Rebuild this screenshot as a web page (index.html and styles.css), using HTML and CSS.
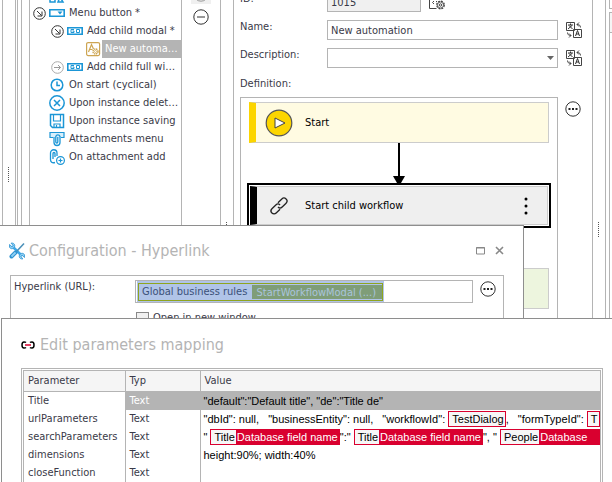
FILE: index.html
```html
<!DOCTYPE html>
<html lang="en">
<head>
<meta charset="utf-8">
<title>Automation editor</title>
<link rel="stylesheet" href="styles.css">
</head>
<body>
<svg class="defs" width="0" height="0" aria-hidden="true">
  <symbol id="translate" viewBox="0 0 16 16"><path d="M.5.5h8v8h-8zM7.500 7.500h8v8h-8z" fill="#fff" stroke="#444"/><path d="M2 3h5M4.500 1.500V3M3 3.500l3.500 3.500M6 3.500L2 7M9.500 14l2-5.500 2 5.500M10 12h3" fill="none" stroke="#333"/><path d="M11 2.500c2.500 0 3.500 1 3.500 3M13 .5l-2 2 2 2M1.500 10.500c0 2 1 3 3.500 3M3 11.500l2 2-2 2" fill="none" stroke="#444"/></symbol>
  <symbol id="more" viewBox="0 0 16 16"><circle cx="8" cy="8" r="7.200" fill="#fff" stroke="#333"/><path d="M3.500 7h2v2h-2zM7 7h2v2H7zM10.500 7h2v2h-2z" fill="#222"/></symbol>
  <symbol id="go" viewBox="0 0 16 16"><path d="M.8 4.800h14.400v6.400H.8z" fill="#fff" stroke="#1b96d6" stroke-width="1.600"/><path d="M7 6.500H4v3h3V8H5.500M9.500 6.500h3v3h-3z" fill="none" stroke="#1b96d6"/></symbol>
</svg>
<div class="app">
  <div class="edge"></div>
  <div class="splitter"><span class="grip grip-left"></span></div>
  <aside class="frame">
    <div class="inner">
      <ul class="tree">
        <li class="lv1"><svg class="ico" viewBox="0 0 16 16"><path d="M1 12h5v3H1zM9 15l2-5 3 5z" fill="none" stroke="#1b96d6" stroke-width="1.500"/></svg><span>On browser opening</span></li>
        <li class="lv0"><svg class="arrow" viewBox="0 0 13 13"><circle cx="6.500" cy="6.500" r="5.800" fill="none" stroke="#333"/><path d="M4 4l4.500 4.500M9 4.500V9H4.500" fill="none" stroke="#333"/></svg><svg class="ico" viewBox="0 0 16 16"><path d="M.8 4.800h14.400v6.400H.8z" fill="#fff" stroke="#1b96d6" stroke-width="1.600"/><path d="M8.500 6.500h5L11 9.500z" fill="#1b96d6"/></svg><span>Menu button *</span></li>
        <li class="lv1"><svg class="arrow" viewBox="0 0 13 13"><circle cx="6.500" cy="6.500" r="5.800" fill="none" stroke="#333"/><path d="M4 4l4.500 4.500M9 4.500V9H4.500" fill="none" stroke="#333"/></svg><svg class="ico"><use href="#go"/></svg><span>Add child modal *</span></li>
        <li class="lv3"><svg class="ico" viewBox="0 0 16 16"><rect x="1.600" y="1.600" width="13" height="13" rx="1.500" fill="#fff" stroke="#cda552" stroke-width="1.200"/><path d="M3.500 11l3-7.500L8.500 8M4.500 8.500h3" fill="none" stroke="#cda552" stroke-width="1.200"/><circle cx="10.500" cy="10.500" r="2.500" fill="none" stroke="#cda552" stroke-width="1.400" stroke-dasharray="1.400 .6"/><circle cx="10.500" cy="10.500" r="1" fill="none" stroke="#cda552" stroke-width=".7"/></svg><span class="selected">New automa…</span></li>
        <li class="lv1"><svg class="arrow" viewBox="0 0 13 13"><circle cx="6.500" cy="6.500" r="5.800" fill="none" stroke="#aaa"/><path d="M3 6.500h6.500M7 4l2.500 2.500L7 9" fill="none" stroke="#999"/></svg><svg class="ico"><use href="#go"/></svg><span>Add child full wi…</span></li>
        <li class="lv1"><svg class="ico" viewBox="0 0 16 16"><circle cx="8" cy="8" r="5.800" fill="#fff" stroke="#1b96d6" stroke-width="1.500"/><path d="M8 4.500V8.500h3" fill="none" stroke="#1b96d6" stroke-width="1.500"/></svg><span>On start (cyclical)</span></li>
        <li class="lv1"><svg class="ico" viewBox="0 0 16 16"><circle cx="8" cy="8" r="7.200" fill="#fff" stroke="#1b96d6" stroke-width="1.500"/><path d="M5 5l6 6M11 5l-6 6" fill="none" stroke="#1b96d6" stroke-width="1.500"/></svg><span>Upon instance delet…</span></li>
        <li class="lv1"><svg class="ico" viewBox="0 0 16 16"><path d="M1.500 1.500h13v13h-11l-2-2z" fill="#fff" stroke="#1b96d6" stroke-width="1.500"/><path d="M4.500 2v6h7V2M5 14.500v-3.500h6v3.500M7.500 12v2" fill="none" stroke="#1b96d6" stroke-width="1.200"/></svg><span>Upon instance saving</span></li>
        <li class="lv1"><svg class="ico" viewBox="0 0 16 16"><path d="M4 6.500H1v-5h14v5h-3" fill="#d8effb" stroke="#1b96d6" stroke-width="1.200"/><path d="M5 6v5.500a3 3 0 0 0 6 0V5.500a2.200 2.200 0 0 0-4.200 0V11a1 1 0 0 0 2 0V6" fill="none" stroke="#1b96d6" stroke-width="1.300"/></svg><span>Attachments menu</span></li>
        <li class="lv1"><svg class="ico" viewBox="0 0 16 16"><path d="M6 13.500c-3 .8-4.500-.5-4.500-3V4a3 3 0 0 1 6.500 0v3M6 8V4.500a1 1 0 0 0-2 0V10" fill="none" stroke="#1b96d6" stroke-width="1.300"/><circle cx="11.500" cy="11.500" r="3.900" fill="#fff" stroke="#1b96d6" stroke-width="1.200"/><path d="M9.500 11.500h4M11.500 9.500v4" stroke="#1b96d6" stroke-width="1.200"/></svg><span>On attachment add</span></li>
      </ul>
      <div class="tools">
        <button class="tool tool-hover" aria-label="Add"><svg viewBox="0 0 16 16"><circle cx="8" cy="8" r="7.200" fill="none" stroke="#999"/><path d="M4 8h8M8 4v8" stroke="#999"/></svg></button>
        <button class="tool" aria-label="Remove"><svg viewBox="0 0 16 16"><circle cx="8" cy="8" r="7.200" fill="none" stroke="#333"/><path d="M4 8h8" stroke="#333"/></svg></button>
      </div>
    </div>
  </aside>
  <div class="splitter"><span class="grip grip-mid"></span></div>
  <main class="editor">
    <form class="form">
      <label for="f-id">ID:</label>
      <div class="id-field"><input id="f-id" value="1015" readonly><svg class="i16" viewBox="0 0 16 16"><path d="M7.500 14.500h-7v-12h4l1 1h6V6" fill="none" stroke="#444"/><path d="M5 7L3.500 8.500 5 10M7 7l1 1" fill="none" stroke="#444"/><circle cx="11.500" cy="11" r="3.700" fill="#fff" stroke="#444" stroke-width="1.400" stroke-dasharray="1.900 1"/><circle cx="11.500" cy="11" r="3" fill="#fff" stroke="#444" stroke-width=".8"/><circle cx="11.500" cy="11" r="1.200" fill="none" stroke="#444"/></svg></div>
      <span></span>
      <label for="f-name">Name:</label>
      <input id="f-name" value="New automation">
      <svg class="i16 side"><use href="#translate"/></svg>
      <label for="f-desc">Description:</label>
      <div class="combo"><select id="f-desc"><option></option></select><svg class="caret" viewBox="0 0 8 4"><path d="M0 0h7L3.500 4z" fill="#666"/></svg></div>
      <svg class="i16 side"><use href="#translate"/></svg>
      <span class="def-label">Definition:</span>
    </form>
    <div class="canvas-row">
      <div class="canvas">
        <div class="node start"><svg class="play" viewBox="0 0 28 28"><circle cx="14" cy="14" r="12.800" fill="#fcd500" stroke="#555" stroke-width="1.200"/><path d="M10 9l10 5-10 5z" fill="#fff" stroke="#444"/></svg><span>Start</span></div>
        <svg class="flow" viewBox="0 0 12 40"><path d="M6 0v34" stroke="#000" stroke-width="2"/><path d="M0 33h12l-4 7H4z" fill="#000"/></svg>
        <div class="focus"><div class="node child"><svg class="chain" viewBox="0 0 20 20"><g transform="rotate(-45 10 10)" fill="none" stroke="#222" stroke-width="1.300"><path d="M8.500 13H3a3 3 0 0 1 0-6h5.500a3 3 0 0 1 3 3"/><path d="M11.500 7H17a3 3 0 0 1 0 6h-5.500a3 3 0 0 1-3-3"/></g></svg><span>Start child workflow</span><svg class="dots" viewBox="0 0 4 18"><circle cx="2" cy="2" r="1.500"/><circle cx="2" cy="9" r="1.500"/><circle cx="2" cy="16" r="1.500"/></svg></div></div>
        <div class="node end"></div>
      </div>
      <button class="round" aria-label="Edit definition"><svg><use href="#more"/></svg></button>
    </div>
  </main>
  <div class="splitter"><span class="grip grip-mid"></span></div>
  <aside class="right"><div class="box-a"></div><div class="box-b"><div class="box-head"></div></div></aside>
</div>

<section class="window config">
  <header><svg class="wrench" viewBox="0 0 18 18"><path d="M4 4l10 10" stroke="#3fa9e8" stroke-width="2.600"/><path d="M1.500 2.500L4 4.800 5.300 3.500 3 1.200C5.500.5 7.500 2.500 6.500 5 5 7.500 2 7 1.500 5zM16.500 15.500L14 13.200l-1.300 1.300 2.300 2.300c-2.500.7-4.500-1.300-3.500-3.800 1.500-2.500 4.500-2 5 0z" fill="#8fd0f5" stroke="#2f93d0" stroke-width=".8"/><path d="M16 1.500L8.500 9.500" stroke="#4a8fb8" stroke-width="1.500"/><path d="M7.500 10.500l-4 4" stroke="#2f93d0" stroke-width="4" stroke-linecap="round"/><path d="M7.500 10.500l-4 4" stroke="#8fd0f5" stroke-width="1.800"/></svg><h2>Configuration - Hyperlink</h2>
    <button aria-label="Maximize"><svg viewBox="0 0 10 10"><path d="M.5 1.500h8v6.500h-8zM0 2h9" fill="none" stroke="#888"/></svg></button><button aria-label="Close"><svg viewBox="0 0 10 10"><path d="M1 1l7 7M8 1L1 8" stroke="#888" stroke-width="1.600"/></svg></button></header>
  <div class="group">
    <span class="url-label">Hyperlink (URL):</span>
    <div class="url-col">
      <div class="url-box"><span class="sel"><span class="rule">Global business rules <b>StartWorkflowModal (...)</b></span></span></div>
      <label class="check"><input type="checkbox">Open in new window</label>
    </div>
    <button class="round" aria-label="Edit hyperlink"><svg><use href="#more"/></svg></button>
  </div>
</section>

<section class="window params">
  <header><svg class="link" viewBox="0 0 14 8"><path d="M5 1.500Q4.500 1 3 1 1 1 1 4t2 3q1.500 0 2-.5M9 1.500q.5-.5 2-.5 2 0 2 3t-2 3q-1.500 0-2-.5" fill="none" stroke="#000" stroke-width="1.500"/><path d="M4 4h6" stroke="#d9002f" stroke-width="1.500"/></svg><h2>Edit parameters mapping</h2></header>
  <div class="grid">
    <table>
      <colgroup><col class="c1"><col class="c2"><col></colgroup>
      <thead><tr><th>Parameter</th><th>Typ</th><th>Value</th></tr></thead>
      <tbody>
        <tr class="current"><td>Title</td><td>Text</td><td>"default":"Default title", "de":"Title de"</td></tr>
        <tr><td>urlParameters</td><td>Text</td><td>"dbId": null,&nbsp;&nbsp; "businessEntity": null,&nbsp;&nbsp; "workflowId": <span class="chip"><i>TestDialog</i></span>,&nbsp;&nbsp; "formTypeId": <span class="chip"><i>T</i></span></td></tr>
        <tr><td>searchParameters</td><td>Text</td><td>" <span class="chip"><i>Title</i><b>Database field name</b></span>":" <span class="chip"><i>Title</i><b>Database field name</b></span>", " <span class="chip"><i>People</i><b class="cut">Database</b></span></td></tr>
        <tr><td>dimensions</td><td>Text</td><td>height:90%; width:40%</td></tr>
        <tr><td>closeFunction</td><td>Text</td><td></td></tr>
      </tbody>
    </table>
  </div>
</section>
</body>
</html>
```
FILE: styles.css
```css
* { box-sizing: border-box; }
body {
  margin: 0;
  height: 100vh;
  overflow: hidden;
  position: relative;
  background: #fff;
  color: #3a3a48;
  font: 11px/14px "DejaVu Sans Condensed", "DejaVu Sans", sans-serif;
}
.defs { position: absolute; }
svg { display: block; flex: none; }
button { padding: 0; border: 0; background: none; }
input, select { font: inherit; color: inherit; }
h2 { margin: 0; font-weight: 400; }

.app { display: flex; height: 100vh; overflow: hidden; }
.edge { width: 3px; border-right: 1px solid #b4b4b4; }
.splitter { width: 12px; flex: none; }
.grip {
  display: block;
  width: 1px;
  height: 15px;
  margin-left: 5px;
  background: repeating-linear-gradient(#555 0 1px, #fff 1px 2px);
}
.grip-left { margin-top: 167px; }
.grip-mid { margin-top: 222px; }
.frame {
  flex: none;
  border-left: 3px double #b4b4b4;
  border-right: 1px solid #b4b4b4;
  padding-left: 3px;
}
.inner { display: flex; height: 100%; border-left: 1px solid #b4b4b4; padding-left: 7px; }

.tree {
  width: 153px;
  margin: -14px 0 0;
  padding: 0;
  list-style: none;
  border: solid #b4b4b4;
  border-width: 0 1px;
}
.tree li { display: flex; align-items: center; height: 18px; white-space: nowrap; }
.tree span { padding-left: 4px; line-height: 18px; }
.tree .selected { flex: 1; margin-left: 1px; padding-left: 3px; background: #b4b4b4; color: #fff; }
.arrow { width: 13px; height: 13px; margin-right: 3px; }
.ico { width: 16px; height: 16px; }
.tree .lv0 { padding-left: 3px; }
.tree .lv1 { padding-left: 19px; }
.tree .lv1 .arrow { margin-left: 2px; }
.tree .lv3 { padding-left: 55px; }

.tools { width: 38px; display: flex; flex-direction: column; align-items: center; margin-top: -16px; }
.tool { width: 20px; height: 20px; display: grid; place-items: center; margin-bottom: 3px; }
.tool-hover { background: #f0f0f0; }
.tool svg { width: 16px; height: 16px; }

.editor {
  flex: 1;
  min-width: 0;
  display: flex;
  flex-direction: column;
  border: solid #b4b4b4;
  border-width: 0 1px;
  padding-left: 6px;
}
.form {
  display: grid;
  grid-template-columns: 87px 1fr 34px;
  row-gap: 8px;
  margin-top: -8px;
}
.form input, .form select {
  width: 100%;
  height: 20px;
  padding: 0 3px;
  border: 1px solid #b4b4b4;
  border-radius: 0;
  background: #fff;
}
.id-field { display: flex; gap: 8px; }
.form #f-id { width: 94px; background: #f0f0f0; }
.i16 { width: 16px; height: 16px; }
.id-field .i16 { margin-top: 2px; }
.side { margin: 2px 0 0 8px; }
.combo { position: relative; }
.combo select { appearance: none; }
.caret { position: absolute; right: 3px; top: 8px; width: 8px; height: 4px; }
.def-label { height: 21px; padding-top: 1px; }

.canvas-row { flex: 1; display: flex; }
.canvas {
  flex: 1;
  display: flex;
  flex-direction: column;
  border: 1px solid #b4b4b4;
  padding: 4px 8px;
  color: #000;
}
.node { display: flex; align-items: center; height: 41px; border: 1px solid #ccc; }
.start { border-left: 7px solid #fcd500; padding-left: 9px; background: #fffbe2; }
.play { width: 28px; height: 28px; margin-right: 12px; }
.flow { width: 12px; height: 40px; align-self: center; }
.focus { margin: 0 -2px; border: 2px solid #000; padding: 1px; }
.child { height: 39px; border-left: 7px solid #000; padding: 0 19px 0 12px; background: #efefef; }
.chain { width: 20px; height: 20px; margin-right: 16px; }
.dots { width: 4px; height: 18px; margin-left: auto; }
.end { margin-top: 40px; background: #edf5de; }
.round svg { width: 16px; height: 16px; }
.canvas-row .round { width: 34px; height: 16px; padding-left: 7px; margin-top: 4px; }

.right { width: 7px; flex: none; border-left: 1px solid #b4b4b4; padding-left: 3px; display: flex; flex-direction: column; gap: 3px; }
.box-a { height: 9px; border: solid #b4b4b4; border-width: 0 0 1px 1px; }
.box-b { flex: 1; border: solid #b4b4b4; border-width: 1px 0 0 1px; }
.box-head { height: 20px; background: #f5f5f5; border-bottom: 1px solid #b4b4b4; }

.window { position: absolute; bottom: 0; display: flex; flex-direction: column; overflow: hidden; background: #fff; border: 1px solid #8e8e8e; border-bottom: 0; }
.window header { display: flex; align-items: center; flex: none; }
.window h2 { flex: 1; color: #b4b4b4; font-size: 16px; line-height: 24px; }
.config { left: -1px; right: 88px; top: 225px; }
.config header { height: 49px; padding: 0 18px 0 8px; }
.wrench { width: 18px; height: 18px; margin-right: 3px; }
.config header button { margin-left: 9px; }
.config header svg:not(.wrench) { width: 10px; height: 10px; }
.group { flex: 1; display: flex; margin: 0 19px 0 10px; border: 1px solid #b4b4b4; padding: 4px 3px; }
.url-label { width: 121px; }
.url-col { flex: 1; }
.url-box { height: 23px; border: 1px solid #b4b4b4; padding: 0 1px; display: flex; }
.sel { height: 21px; padding: 2px 1px 1px; background: #b0c4e8; }
.rule { display: block; height: 18px; padding: 0 0 0 3px; line-height: 16px; border: 1px solid #8fa51e; color: #3a5078; white-space: nowrap; }
.rule b { display: inline-block; height: 14px; margin: 1px 0 0 2px; line-height: 15px; vertical-align: top; padding: 0 6px 0 4px; background: #7f9d78; color: #a9c4dc; font-weight: 400; }
.check { display: flex; align-items: center; margin-top: 8px; }
.check input { appearance: none; width: 13px; height: 13px; margin: 0 4px 0 1px; border: 1px solid #888; background: #f0f0f0; }
.config .round { width: 27px; height: 16px; padding-left: 7px; margin-top: 1px; }

.params { left: 1px; right: -1px; top: 318px; }
.params header { height: 49px; padding: 2px 0 0 19px; }
.link { width: 14px; height: 8px; margin-right: 5px; }
.grid { flex: 1; margin: 0 9px 0 19px; border: 3px double #b4b4b4; border-bottom: 0; overflow: hidden; }
table { width: 100%; border-collapse: collapse; table-layout: fixed; }
.c1 { width: 101px; }
.c2 { width: 75px; }
th, td { height: 18px; padding: 0 4px; line-height: 18px; text-align: left; font-weight: 400; white-space: nowrap; overflow: hidden; }
th { height: 20px; background: #f5f5f5; border-bottom: 1px solid #b4b4b4; }
tr > :not(:last-child) { border-right: 1px solid #b4b4b4; }
td:last-child { padding-right: 0; padding-left: 3px; color: #000; font-family: "Liberation Sans", sans-serif; }
.current td:not(:first-child) { background: #b4b4b4; }
.current td:nth-child(2) { color: #fff; }
.chip { display: inline-flex; height: 16px; border: 1px solid #d9002f; line-height: 14px; vertical-align: top; margin-top: 1px; }
.chip i { padding: 0 1px 0 3px; background: #f7f7f7; font-style: normal; }
.chip b { padding: 0 1px; background: #d9002f; color: #fff; font-weight: 400; }
.chip .cut { padding-right: 30px; }
```
